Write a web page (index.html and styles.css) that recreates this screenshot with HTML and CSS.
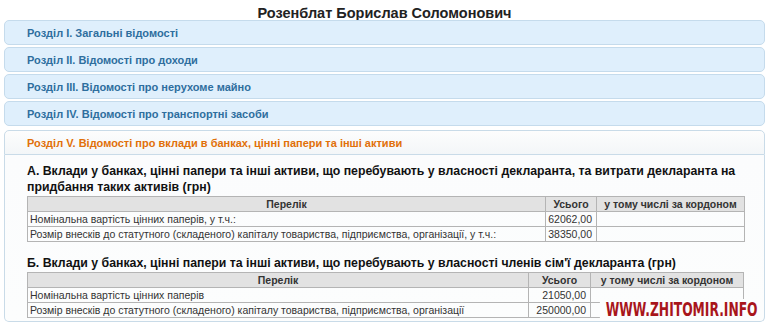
FILE: index.html
```html
<!DOCTYPE html>
<html lang="uk">
  <head>
    <meta charset="UTF-8" />
    <meta name="viewport" content="width=device-width, initial-scale=1.0" />
    <title>Розенблат Борислав Соломонович</title>
    <link rel="stylesheet" href="styles.css">
  </head>

  <body>
    <main>
      <h1 class="name">Розенблат Борислав Соломонович</h1>
      <div class="accordion">
        <h3 class="acc-head">Розділ I. Загальні відомості</h3>
        <h3 class="acc-head">Розділ II. Відомості про доходи</h3>
        <h3 class="acc-head">Розділ III. Відомості про нерухоме майно</h3>
        <h3 class="acc-head">Розділ IV. Відомості про транспортні засоби</h3>
        <h3 class="acc-head active">Розділ V. Відомості про вклади в банках, цінні папери та інші активи</h3>
        <div class="acc-body">
          <h4 class="sub">А. Вклади у банках, цінні папери та інші активи, що перебувають у власності декларанта, та витрати декларанта на придбання таких активів (грн)</h4>
          <table class="tbl tbl-a">
            <tr>
              <th class="c-name">Перелік</th>
              <th class="c-sum">Усього</th>
              <th class="c-abroad">у тому числі за кордоном</th>
            </tr>
            <tr>
              <td>Номінальна вартість цінних паперів, у т.ч.:</td>
              <td class="num">62062,00</td>
              <td></td>
            </tr>
            <tr>
              <td>Розмір внесків до статутного (складеного) капіталу товариства, підприємства, організації, у т.ч.:</td>
              <td class="num">38350,00</td>
              <td></td>
            </tr>
          </table>

          <h4 class="sub">Б. Вклади у банках, цінні папери та інші активи, що перебувають у власності членів сім'ї декларанта (грн)</h4>
          <table class="tbl tbl-b">
            <tr>
              <th class="c-name">Перелік</th>
              <th class="c-sum">Усього</th>
              <th class="c-abroad">у тому числі за кордоном</th>
            </tr>
            <tr>
              <td>Номінальна вартість цінних паперів</td>
              <td class="num">21050,00</td>
              <td></td>
            </tr>
            <tr>
              <td>Розмір внесків до статутного (складеного) капіталу товариства, підприємства, організації</td>
              <td class="num">250000,00</td>
              <td></td>
            </tr>
          </table>

          <div class="watermark">WWW.ZHITOMIR.INFO</div>
        </div>
      </div>
    </main>
  </body>
</html>
```

FILE: styles.css
```css
* {
  margin: 0;
  padding: 0;
  box-sizing: border-box;
}

body {
  background-color: #fff;
  font-family: "Liberation Sans", Arial, sans-serif;
  color: #222;
  padding: 0 5px 0 4px;
}

.name {
  font-size: 14.5px;
  font-weight: bold;
  text-align: center;
  line-height: 20px;
  height: 20px;
  padding-top: 3px;
  color: #222;
}

.accordion {
  display: flex;
  flex-direction: column;
}

.acc-head {
  height: 25px;
  margin-bottom: 2px;
  padding-left: 22px;
  display: flex;
  align-items: center;
  font-size: 11px;
  font-weight: bold;
  color: #2e6e9e;
  background-color: #dfeffc;
  border: 1px solid #c5dbec;
  border-radius: 5px;
  cursor: pointer;
}

.acc-head.active {
  margin-top: 2px;
  margin-bottom: 0;
  color: #e17009;
  background: linear-gradient(#fdfdfd, #f3f6f8);
  border-color: #c9dbe8;
  border-radius: 5px 5px 0 0;
}

.acc-body {
  position: relative;
  height: 167px;
  padding: 8px 19px 0 22px;
  background: linear-gradient(#fbfcfd, #fcfdfd);
  border: 1px solid #c9dbe8;
  border-top: none;
  border-radius: 0 0 5px 5px;
}

.sub {
  font-size: 12.3px;
  font-weight: bold;
  line-height: 16px;
  color: #111;
  margin-bottom: 1px;
}

.tbl {
  border-collapse: collapse;
  font-size: 10.5px;
  color: #333;
  margin-bottom: 13px;
}

.tbl th,
.tbl td {
  border: 1px solid #b4b4b4;
  height: 15px;
  padding: 0 2px;
  line-height: 13px;
}

.tbl th {
  background-color: #e2e2e2;
  font-weight: bold;
  text-align: center;
}

.tbl td.num {
  text-align: right;
  padding-right: 4px;
}

.tbl-a {
  width: 718px;
}

.tbl-a .c-name {
  width: 518px;
}

.tbl-a .c-sum {
  width: 51px;
}

.tbl-b {
  width: 717px;
}

.tbl-b .c-name {
  width: 501px;
}

.tbl-b .c-sum {
  width: 62px;
}

.watermark {
  position: absolute;
  right: 5px;
  bottom: 2px;
  padding: 0 2px 0 8px;
  font-family: "Liberation Sans Narrow", "DejaVu Sans Condensed", sans-serif;
  font-weight: bold;
  font-size: 19px;
  line-height: 20px;
  color: #a8151b;
  background-color: #fcfdfd;
  transform: scaleX(0.72);
  transform-origin: right center;
}
```
